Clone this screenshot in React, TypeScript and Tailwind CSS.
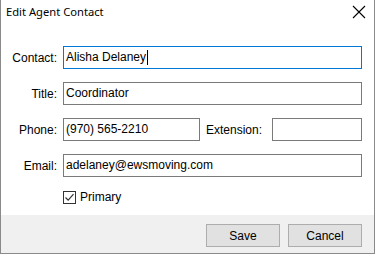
import React from "react";

const inputCls =
  "h-[23px] border border-[#7a7a7a] bg-white px-[2px] text-[12px] text-black outline-none leading-[21px]";

export default function App() {
  return (
    <div
      className="w-[375px] h-[254px] flex flex-col bg-white border-l border-r border-b border-[#8a8a8a] overflow-hidden"
      style={{ fontFamily: '"Liberation Sans", Arial, sans-serif' }}
    >
      {/* Title bar */}
      <div className="h-[30px] flex items-start justify-between pl-[5px] pr-[7px] pt-[4px]">
        <span
          className="text-[11.2px] text-black leading-[16px]"
          style={{ fontFamily: '"Noto Sans", "Open Sans", sans-serif' }}
        >
          Edit Agent Contact
        </span>
        <svg width="14" height="14" viewBox="0 0 14 14" className="mt-[1px] mr-[1px]">
          <path d="M1 1 L13 13 M13 1 L1 13" stroke="#000" strokeWidth="1.1" />
        </svg>
      </div>

      {/* Form */}
      <div className="flex-1 flex flex-col pt-[16px] pl-[0px] text-[12px] text-black">
        <div className="flex flex-col gap-[13px]">
          <div className="flex items-center">
            <span className="w-[57px] text-right pr-[1px]">Contact:</span>
            <div className="ml-[5px] w-[299px] h-[23px] border border-[#0078d7] px-[2px] leading-[21px] flex items-center">
              <span>Alisha Delaney</span>
              <span className="inline-block w-[1px] h-[15px] bg-black ml-[1px]" />
            </div>
          </div>
          <div className="flex items-center">
            <span className="w-[57px] text-right pr-[1px]">Title:</span>
            <div className={`ml-[5px] w-[299px] ${inputCls}`}>Coordinator</div>
          </div>
          <div className="flex items-center">
            <span className="w-[57px] text-right pr-[1px]">Phone:</span>
            <div className={`ml-[5px] w-[137px] ${inputCls}`}>(970) 565-2210</div>
            <span className="ml-[6px] w-[66px]">Extension:</span>
            <div className={`w-[90px] ${inputCls}`}></div>
          </div>
          <div className="flex items-center">
            <span className="w-[57px] text-right pr-[1px]">Email:</span>
            <div className={`ml-[5px] w-[299px] ${inputCls}`}>adelaney@ewsmoving.com</div>
          </div>
        </div>
        <div className="flex items-center ml-[62px] mt-[11px]">
          <div className="w-[13px] h-[13px] border border-[#333] bg-white flex items-center justify-center">
            <svg width="11" height="11" viewBox="0 0 11 11">
              <path d="M1.5 5.5 L4.2 8.2 L9.5 2.2" stroke="#333" strokeWidth="1.2" fill="none" />
            </svg>
          </div>
          <span className="ml-[4px]">Primary</span>
        </div>
      </div>

      {/* Footer */}
      <div className="h-[38px] bg-[#f0f0f0] flex items-start justify-end gap-[8px] pt-[9px] pr-[12px]">
        <button className="w-[74px] h-[23px] bg-[#e1e1e1] border border-[#adadad] text-[12px] text-black">
          Save
        </button>
        <button className="w-[74px] h-[23px] bg-[#e1e1e1] border border-[#adadad] text-[12px] text-black">
          Cancel
        </button>
      </div>
    </div>
  );
}
